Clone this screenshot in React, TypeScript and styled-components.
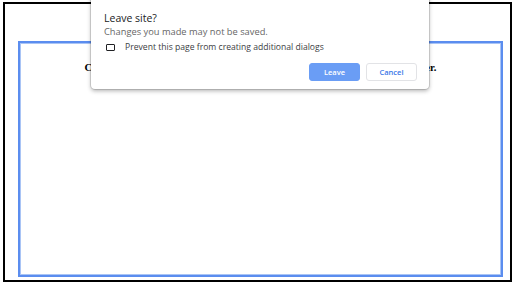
import styled, { createGlobalStyle } from 'styled-components';

const Global = createGlobalStyle`
    html, body {
        margin: 0;
        padding: 0;
        background: #ffffff;
        overflow: hidden;
    }
`

const Page = styled.div`
    position: relative;
    width: 514px;
    height: 286px;
    padding: 2px 0 0 3px;
    box-sizing: border-box;
`

const Frame = styled.div`
    width: 509px;
    height: 280px;
    box-sizing: border-box;
    border: 2px solid #000000;
    padding: 37px 7px 0 13px;
`

const Box = styled.div`
    height: 236px;
    box-sizing: border-box;
    border: 2px solid #5b8def;
    box-shadow: inset 0 0 0 1px #a9c4f5;
    padding-top: 18px;
`

const Heading = styled.h3`
    margin: 0;
    text-align: center;
    font-family: 'Liberation Serif', serif;
    font-weight: bold;
    font-size: 10.7px;
    line-height: 13px;
    color: #000000;
`

const Dialog = styled.div`
    position: absolute;
    left: 91px;
    top: -8px;
    width: 338px;
    height: 97px;
    box-sizing: border-box;
    padding: 19px 12px 0 13px;
    background: #ffffff;
    border-radius: 4px;
    box-shadow: 0 0 0 1px rgba(0,0,0,0.12), 0 2px 4px rgba(0,0,0,0.3);
    font-family: 'Open Sans', sans-serif;
`

const Title = styled.div`
    font-size: 10.5px;
    line-height: 14px;
    color: #202124;
`

const Message = styled.div`
    margin-top: 1px;
    font-size: 9.3px;
    line-height: 12px;
    color: #666666;
`

const CheckRow = styled.label`
    display: flex;
    align-items: center;
    margin-top: 3px;
    height: 12px;
    font-size: 8.6px;
    color: #3c4043;
`

const Check = styled.span`
    width: 7px;
    height: 5px;
    margin: 0 10px 0 2px;
    border: 1.5px solid #202124;
    border-radius: 1px;
`

const Buttons = styled.div`
    display: flex;
    justify-content: flex-end;
    gap: 6px;
    margin-top: 10px;
`

const Button = styled.div<{primary?: boolean}>`
    width: 51px;
    height: 18px;
    box-sizing: border-box;
    display: flex;
    align-items: center;
    justify-content: center;
    border-radius: 3px;
    font-size: 7.5px;
    font-weight: 600;
    background: ${p => p.primary ? '#6a9df5' : '#ffffff'};
    color: ${p => p.primary ? '#ffffff' : '#3b78e7'};
    border: 1px solid ${p => p.primary ? '#6a9df5' : '#e2e3e6'};
`

export default function App() {
    return (
        <Page>
            <Global />
            <Frame>
                <Box>
                    <Heading>Close the current tab to see the beforeunload dialog box of your web browser.</Heading>
                </Box>
            </Frame>
            <Dialog>
                <Title>Leave site?</Title>
                <Message>Changes you made may not be saved.</Message>
                <CheckRow>
                    <Check />
                    Prevent this page from creating additional dialogs
                </CheckRow>
                <Buttons>
                    <Button primary>Leave</Button>
                    <Button>Cancel</Button>
                </Buttons>
            </Dialog>
        </Page>
    )
}
